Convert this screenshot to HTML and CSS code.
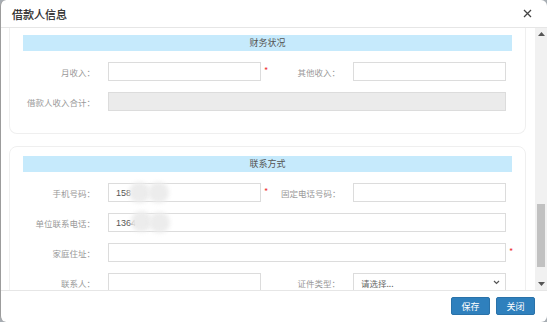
FILE: index.html
```html
<!DOCTYPE html>
<html lang="zh-CN">
<head>
    <meta charset="UTF-8">
    <title>借款人信息</title>
    <link rel="stylesheet" href="styles.css">
</head>
<body>
    <div class="dialog">
        <div class="dlg-head">
            <span class="dlg-title">借款人信息</span>
            <svg class="dlg-close" width="9" height="9" viewBox="0 0 9 9"><path d="M1 1 L8 8 M8 1 L1 8" stroke="#444" stroke-width="1.3" fill="none"/></svg>
        </div>
        <div class="dlg-body">
            <div class="content">
                <div class="card cut">
                    <div class="bar">财务状况</div>
                    <div class="row">
                        <label class="lbl">月收入：</label>
                        <input class="inp" type="text">
                        <span class="req">*</span>
                        <label class="lbl2">其他收入：</label>
                        <input class="inp" type="text">
                    </div>
                    <div class="row">
                        <label class="lbl">借款人收入合计：</label>
                        <input class="inp wide" type="text" disabled>
                    </div>
                </div>

                <div class="card">
                    <div class="bar">联系方式</div>
                    <div class="row">
                        <label class="lbl">手机号码：</label>
                        <div class="masked">
                            <input class="inp" type="text" value="158">
                            <span class="blob b1"></span><span class="blob b2"></span>
                        </div>
                        <span class="req">*</span>
                        <label class="lbl2">固定电话号码：</label>
                        <input class="inp" type="text">
                    </div>
                    <div class="row">
                        <label class="lbl">单位联系电话：</label>
                        <div class="masked">
                            <input class="inp wide" type="text" value="1364">
                            <span class="blob b3"></span><span class="blob b4"></span>
                        </div>
                    </div>
                    <div class="row">
                        <label class="lbl">家庭住址：</label>
                        <input class="inp wide" type="text">
                        <span class="req">*</span>
                    </div>
                    <div class="row">
                        <label class="lbl">联系人：</label>
                        <input class="inp" type="text">
                        <span class="req"></span>
                        <label class="lbl2">证件类型：</label>
                        <div class="select">
                            <span>请选择...</span>
                            <svg width="7" height="5" viewBox="0 0 7 5"><path d="M1 1 L3.5 3.5 L6 1" stroke="#555" stroke-width="1.2" fill="none"/></svg>
                        </div>
                    </div>
                </div>
            </div>
            <div class="scrollbar">
                <svg class="arrow" width="7" height="4" viewBox="0 0 7 4"><path d="M0 4 L3.5 0 L7 4 Z" fill="#555"/></svg>
                <div class="track"><div class="thumb"></div></div>
                <svg class="arrow" width="7" height="4" viewBox="0 0 7 4"><path d="M0 0 L3.5 4 L7 0 Z" fill="#555"/></svg>
            </div>
        </div>
        <div class="dlg-foot">
            <button class="btn">保存</button>
            <button class="btn">关闭</button>
        </div>
    </div>
</body>
</html>
```

FILE: styles.css
```css
body {
    margin: 0;
    background-color: #a7adb3;
    font-family: "Noto Sans CJK SC", "Liberation Sans", sans-serif;
}

.dialog {
    width: 547px;
    height: 322px;
    box-sizing: border-box;
    background-color: white;
    border-left: 1px solid #9c9c9c;
    border-radius: 6px;
    overflow: hidden;
    display: flex;
    flex-direction: column;
}

.dlg-head {
    height: 27px;
    flex: none;
    display: flex;
    align-items: center;
    justify-content: space-between;
    padding: 0 15px 0 11px;
    border-bottom: 1px solid #e6e6e6;
}

.dlg-title {
    font-size: 11px;
    color: #222;
    -webkit-text-stroke: 0.2px #222;
}

.dlg-body {
    height: 262px;
    flex: none;
    display: flex;
}

.content {
    flex: 1;
    overflow: hidden;
    padding: 0 9px 0 8px;
}

/* section box */
.card {
    border: 1px solid #efefef;
    border-radius: 8px;
    padding: 9px 13px 12px 13px;
    margin-top: 12px;
}

.card.cut {
    margin-top: 0;
    border-top: none;
    border-top-left-radius: 0;
    border-top-right-radius: 0;
    padding-top: 7px;
    padding-bottom: 11px;
}

.bar {
    height: 16px;
    line-height: 16px;
    background-color: #c6eafc;
    text-align: center;
    font-size: 9px;
    color: #555;
    margin-bottom: 11px;
}

.row {
    display: flex;
    align-items: center;
    height: 19px;
    margin-bottom: 11px;
}

.row > * {
    flex: none;
}

.lbl {
    width: 72px;
    margin-right: 13px;
    text-align: right;
    font-size: 8.5px;
    color: #999;
    white-space: nowrap;
}

.lbl2 {
    width: 59px;
    margin-right: 13px;
    text-align: right;
    font-size: 8.5px;
    color: #999;
    white-space: nowrap;
}

.inp {
    width: 153px;
    height: 19px;
    box-sizing: border-box;
    border: 1px solid #dcdcdc;
    padding: 0 7px;
    margin: 0;
    font-family: "Liberation Sans", sans-serif;
    font-size: 9px;
    color: #555;
    background-color: white;
    outline: none;
}

.inp.wide {
    width: 398px;
}

.inp:disabled {
    background-color: #ebebeb;
}

.req {
    width: 20px;
    padding-left: 3px;
    box-sizing: border-box;
    color: #e33;
    font-size: 9px;
    line-height: 9px;
    margin-top: -3px;
}

.masked {
    position: relative;
    display: flex;
}

.blob {
    position: absolute;
    width: 21px;
    height: 21px;
    border-radius: 50%;
    background-color: #ececec;
    filter: blur(2px);
}

.b1 { left: 21px; top: -1px; }
.b2 { left: 40px; top: -1px; }
.b3 { left: 23px; top: -2px; }
.b4 { left: 41px; top: -1px; }

.select {
    width: 153px;
    height: 19px;
    box-sizing: border-box;
    border: 1px solid #dcdcdc;
    display: flex;
    align-items: center;
    justify-content: space-between;
    padding: 0 5px 0 7px;
    font-size: 8.5px;
    color: #666;
}

.scrollbar {
    width: 12px;
    flex: none;
    background-color: #f1f1f1;
    display: flex;
    flex-direction: column;
    align-items: center;
}

.arrow {
    margin: 4px 0;
}

.track {
    flex: 1;
    width: 8px;
    padding-top: 164px;
}

.thumb {
    height: 63px;
    background-color: #c1c1c1;
}

.dlg-foot {
    flex: 1;
    border-top: 1px solid #e6e6e6;
    display: flex;
    justify-content: flex-end;
    align-items: flex-start;
    padding: 6px 12px 0 0;
}

.btn {
    background-color: #2f80bd;
    border: 1px solid #2a72a9;
    color: white;
    border-radius: 2px;
    width: 39px;
    height: 18px;
    padding: 0;
    margin-left: 6px;
    font-family: "Noto Sans CJK SC", sans-serif;
    font-size: 9px;
    cursor: pointer;
}
```
